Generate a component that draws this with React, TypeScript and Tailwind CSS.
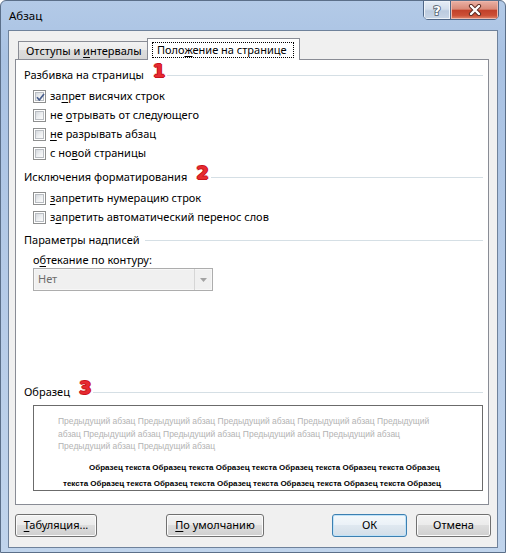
import React from "react";

function U({ children }: { children: React.ReactNode }) {
  return <span className="underline underline-offset-[2px] decoration-[1px]">{children}</span>;
}

function Checkbox({ checked }: { checked?: boolean }) {
  return (
    <div className="relative w-[13px] h-[13px] shrink-0 border border-[#8e8f8f] bg-white p-[1px]">
      <div className="w-full h-full border border-[#b9bdc2] bg-gradient-to-br from-[#d5d9de] via-[#eceef0] to-[#fbfbfb]" />
      {checked && (
        <svg className="absolute inset-0" width="13" height="13" viewBox="0 0 13 13">
          <path d="M3 6.2 L5.3 9 L10 3" fill="none" stroke="#4a5f8e" strokeWidth="1.7" strokeLinejoin="round" />
        </svg>
      )}
    </div>
  );
}

function Marker({ n }: { n: string }) {
  return (
    <span className="ml-[9px] -mt-[8px] text-[18px] leading-none font-bold text-[#e62a30] font-['DejaVu_Sans',sans-serif] [text-shadow:1px_0_0_#c8141c,-1px_0_0_#c8141c,0_1px_0_#c8141c,0_-1px_0_#c8141c,0_0_2px_#ffffff]">
      {n}
    </span>
  );
}

function Heading({ children, marker }: { children: React.ReactNode; marker?: string }) {
  return (
    <div className="flex items-center h-[16px]">
      <span className="whitespace-nowrap">{children}</span>
      {marker ? <Marker n={marker} /> : null}
      <div className={"flex-1 h-px bg-[#d5dfe5] " + (marker ? "ml-[2px]" : "ml-[5px]")} />
    </div>
  );
}

function CbRow({ checked, children }: { checked?: boolean; children: React.ReactNode }) {
  return (
    <div className="flex items-center h-[19px] pl-[9px] gap-[4px]">
      <Checkbox checked={checked} />
      <span className="whitespace-nowrap">{children}</span>
    </div>
  );
}

function Button({ children, w, ml, primary }: { children: React.ReactNode; w: string; ml: string; primary?: boolean }) {
  return (
    <div
      className={
        "h-[23px] flex items-center justify-center rounded-[3px] border " +
        w +
        " " +
        ml +
        " " +
        (primary
          ? "border-[#3c7fb1] shadow-[inset_0_0_0_1px_#bfe2f8] bg-[linear-gradient(to_bottom,#f4f8fb_0%,#eaf1f7_50%,#dfe8f0_50%,#d3dee8_100%)]"
          : "border-[#707070] shadow-[inset_0_0_0_1px_#fbfbfb] bg-[linear-gradient(to_bottom,#f2f2f2_0%,#ebebeb_50%,#dddddd_50%,#cfcfcf_100%)]")
      }
    >
      <span className="whitespace-nowrap">{children}</span>
    </div>
  );
}

export default function App() {
  return (
    <div className="w-[506px] h-[553px] flex flex-col rounded-t-[6px] border border-[#5b6f89] overflow-hidden bg-[linear-gradient(to_bottom,#b3cae7_0%,#a9c2e3_10%,#b7cce8_60%,#c0d4ec_100%)] font-['Noto_Sans',sans-serif] text-[11px] text-black">
      {/* Title bar */}
      <div className="h-[29px] flex items-start shrink-0">
        <div className="pl-[8px] pt-[6px] leading-[18px] text-[11.5px]">Абзац</div>
        <div className="flex-1" />
        <div className="mr-[6px] flex h-[20px] -mt-px rounded-b-[5px] border border-[#4f6686] overflow-hidden">
          <div className="w-[27px] h-full flex items-center justify-center border-r border-[#4f6686] bg-[linear-gradient(to_bottom,#e6edf6_0%,#d3deec_45%,#bccbdf_55%,#c9d6e6_100%)] shadow-[inset_0_0_0_1px_#eef3f9]">
            <span className="font-['DejaVu_Sans',sans-serif] font-bold text-[13px] leading-none text-white [-webkit-text-stroke:1.6px_#4d5a6b] [paint-order:stroke_fill]">?</span>
          </div>
          <div className="w-[47px] h-full flex items-center justify-center bg-[linear-gradient(to_bottom,#eab1a5_0%,#d98a78_45%,#c2412a_52%,#cc4f36_80%,#e18a6e_100%)] shadow-[inset_0_0_0_1px_#f0b7aa]">
            <svg width="14" height="12" viewBox="0 0 14 12">
              <path d="M3 2 L11 10 M11 2 L3 10" stroke="#5a2a22" strokeWidth="4.2" strokeLinecap="round" />
              <path d="M3 2 L11 10 M11 2 L3 10" stroke="#ffffff" strokeWidth="2.4" strokeLinecap="round" />
            </svg>
          </div>
        </div>
      </div>

      {/* Client area */}
      <div className="ml-[7px] w-[490px] h-[518px] border border-[#6f829b] bg-[#f0f0f0] flex flex-col">
        {/* Tabs */}
        <div className="mt-[7px] h-[21px] flex items-end pl-[9px] relative z-10">
          <div className="w-[129px] h-[18px] border-l border-t border-[#898c95] bg-[linear-gradient(to_bottom,#f2f2f2_0%,#ebebeb_50%,#dddddd_50%,#d6d6d6_100%)] pl-[7px] flex items-center leading-[16px]">
            <span className="whitespace-nowrap">
              Отступы и <U>и</U>нтервалы
            </span>
          </div>
          <div className="w-[153px] h-[22px] -mb-px border-l border-t border-r border-[#898c95] bg-white pl-[4px] pt-[3px]">
            <div className="w-[142px] border border-dotted border-black px-[4px] h-[16px] flex items-center leading-[14px]">
              <span className="whitespace-nowrap">
                Поло<U>ж</U>ение на странице
              </span>
            </div>
          </div>
        </div>

        {/* Panel */}
        <div className="ml-[6px] w-[474px] h-[446px] border border-[#898c95] bg-white flex flex-col pl-[8px] pr-[5px]">
          <div className="mt-[7px]">
            <Heading marker="1">Разбивка на страницы</Heading>
          </div>
          <div className="mt-[4px] flex flex-col">
            <CbRow checked>
              за<U>п</U>рет висячих строк
            </CbRow>
            <CbRow>
              не <U>о</U>трывать от следующего
            </CbRow>
            <CbRow>
              <U>н</U>е разрывать абзац
            </CbRow>
            <CbRow>
              с но<U>в</U>ой страницы
            </CbRow>
          </div>
          <div className="mt-[6px]">
            <Heading marker="2">Исключения форматирования</Heading>
          </div>
          <div className="mt-[4px] flex flex-col">
            <CbRow>
              <U>з</U>апретить нумерацию строк
            </CbRow>
            <CbRow>
              з<U>а</U>претить автоматический перенос слов
            </CbRow>
          </div>
          <div className="mt-[5px]">
            <Heading>Параметры надписей</Heading>
          </div>
          <div className="mt-[4px] h-[16px] pl-[9px] flex items-center">
            <span className="whitespace-nowrap">
              о<U>б</U>текание по контуру:
            </span>
          </div>
          <div className="ml-[9px] w-[180px] h-[23px] border border-[#adadad] bg-[#f0f0f0] flex shadow-[inset_0_0_0_1px_#f7f7f7]">
            <div className="flex-1 pl-[4px] flex items-center text-[#6d6d6d]">Нет</div>
            <div className="w-[18px] border-l border-[#d6d6d6] flex items-center justify-center">
              <svg width="7" height="4" viewBox="0 0 7 4">
                <path d="M0 0 L7 0 L3.5 4 Z" fill="#a3a3a3" />
              </svg>
            </div>
          </div>

          <div className="mt-[93px]">
            <Heading marker="3">Образец</Heading>
          </div>
          <div className="mt-[5px] ml-[9px] h-[86px] border border-[#6b6b6b] bg-white overflow-hidden font-['Liberation_Sans',sans-serif]">
            <div className="pt-[9px] pl-[24px] text-[8.5px] leading-[12.5px] text-[#b3b3b3] whitespace-nowrap">
              <div>Предыдущий абзац Предыдущий абзац Предыдущий абзац Предыдущий абзац Предыдущий</div>
              <div>абзац Предыдущий абзац Предыдущий абзац Предыдущий абзац Предыдущий абзац</div>
              <div>Предыдущий абзац Предыдущий абзац</div>
            </div>
            <div className="mt-[7px] text-[8px] leading-[16.5px] font-bold text-black whitespace-nowrap">
              <div className="ml-[55px] w-[349px] [text-align-last:justify]">
                Образец текста Образец текста Образец текста Образец текста Образец текста Образец
              </div>
              <div className="ml-[29px] w-[375px] [text-align-last:justify]">
                текста Образец текста Образец текста Образец текста Образец текста Образец текста Образец
              </div>
            </div>
          </div>
        </div>

        {/* Buttons */}
        <div className="mt-[9px] flex">
          <Button w="w-[82px]" ml="ml-[6px]">
            <U>Т</U>абуляция...
          </Button>
          <Button w="w-[98px]" ml="ml-[69px]">
            <U>П</U>о умолчанию
          </Button>
          <Button w="w-[75px]" ml="ml-[68px]" primary>
            ОК
          </Button>
          <Button w="w-[75px]" ml="ml-[9px]">
            Отмена
          </Button>
        </div>
      </div>
    </div>
  );
}
